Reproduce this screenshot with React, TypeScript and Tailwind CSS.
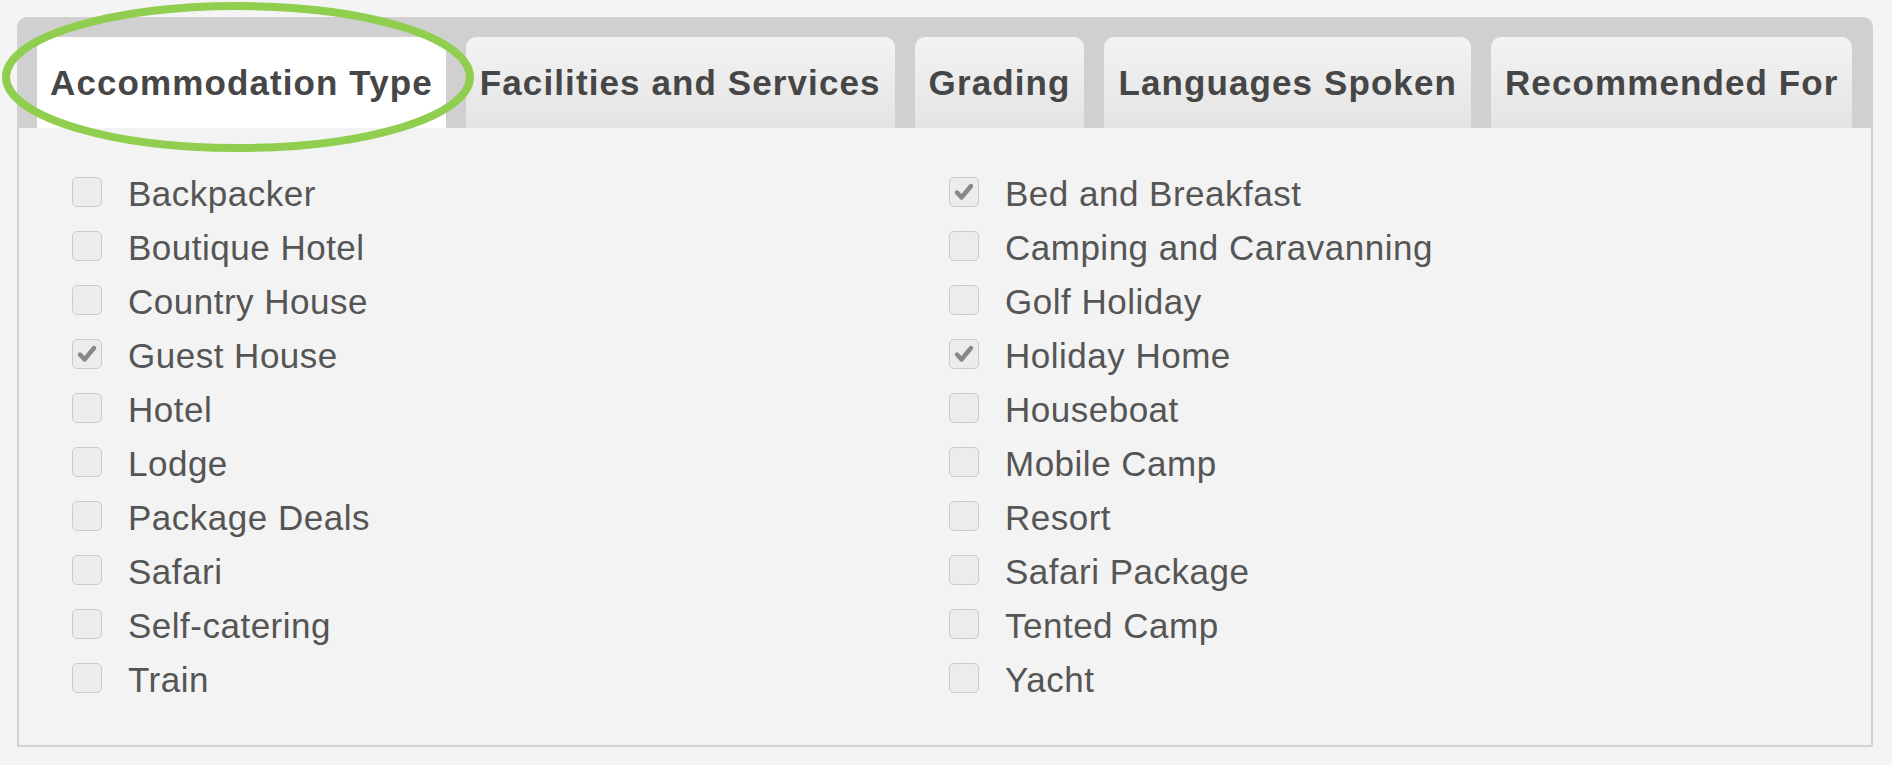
import React from 'react';

const tabs = ['Accommodation Type', 'Facilities and Services', 'Grading', 'Languages Spoken', 'Recommended For'];

const left: [string, boolean][] = [
    ['Backpacker', false],
    ['Boutique Hotel', false],
    ['Country House', false],
    ['Guest House', true],
    ['Hotel', false],
    ['Lodge', false],
    ['Package Deals', false],
    ['Safari', false],
    ['Self-catering', false],
    ['Train', false],
];

const right: [string, boolean][] = [
    ['Bed and Breakfast', true],
    ['Camping and Caravanning', false],
    ['Golf Holiday', false],
    ['Holiday Home', true],
    ['Houseboat', false],
    ['Mobile Camp', false],
    ['Resort', false],
    ['Safari Package', false],
    ['Tented Camp', false],
    ['Yacht', false],
];

const Box: React.FC<{ checked: boolean }> = ({ checked }) => (
    <span className="w-[30px] h-[30px] shrink-0 rounded-[5px] border-[1.5px] border-[#cbcbcb] bg-[#ececec] flex items-center justify-center">
        {checked && (
            <svg width="22" height="22" viewBox="0 0 22 22">
                <path d="M4 11.5 L8.5 16.5 L18 5" fill="none" stroke="#888" strokeWidth="4.4" strokeLinecap="round" strokeLinejoin="round" />
            </svg>
        )}
    </span>
);

const Column: React.FC<{ items: [string, boolean][] }> = ({ items }) => (
    <div className="flex flex-col">
        {items.map(([label, checked]) => (
            <label key={label} className="h-[54px] flex items-center gap-[26px]">
                <Box checked={checked} />
                <span className="text-[35px] leading-none tracking-[0.5px] text-[#555] pt-[3px]">{label}</span>
            </label>
        ))}
    </div>
);

const App: React.FC = () => {
    return (
        <div className="relative w-[1892px] h-[765px] overflow-hidden bg-[#f4f4f4] pl-[17px] pr-[19px] pt-[17px] font-['Liberation_Sans',Arial,sans-serif]">
            {/* Tab strip */}
            <div className="rounded-t-[10px] bg-[#d0d0d0] pl-[20px] pt-[20px] flex gap-[20px]">
                {tabs.map((t, i) => (
                    <div
                        key={t}
                        className={
                            i === 0
                                ? 'h-[91px] px-[13px] pt-[1px] rounded-t-[10px] bg-white flex items-center text-[35px] font-bold tracking-[1.1px] text-[#464646]'
                                : 'h-[91px] px-[14px] pt-[1px] rounded-t-[10px] bg-gradient-to-b from-[#f3f3f3] to-[#e4e4e4] flex items-center text-[35px] font-bold tracking-[1.1px] text-[#464646]'
                        }
                    >
                        {t}
                    </div>
                ))}
            </div>

            {/* Panel */}
            <div className="border-2 border-t-0 border-[#d2d2d2] bg-[#f3f3f3] pl-[53px] pr-[53px] pt-[37px] pb-[40px] grid grid-cols-[877px_1fr]">
                <Column items={left} />
                <Column items={right} />
            </div>

            {/* highlight ring */}
            <svg className="absolute left-0 top-0 pointer-events-none" width="480" height="160" viewBox="0 0 480 160">
                <ellipse cx="238" cy="77" rx="232" ry="71" fill="none" stroke="#8fce4f" strokeWidth="8" />
            </svg>
        </div>
    );
};

export default App;
